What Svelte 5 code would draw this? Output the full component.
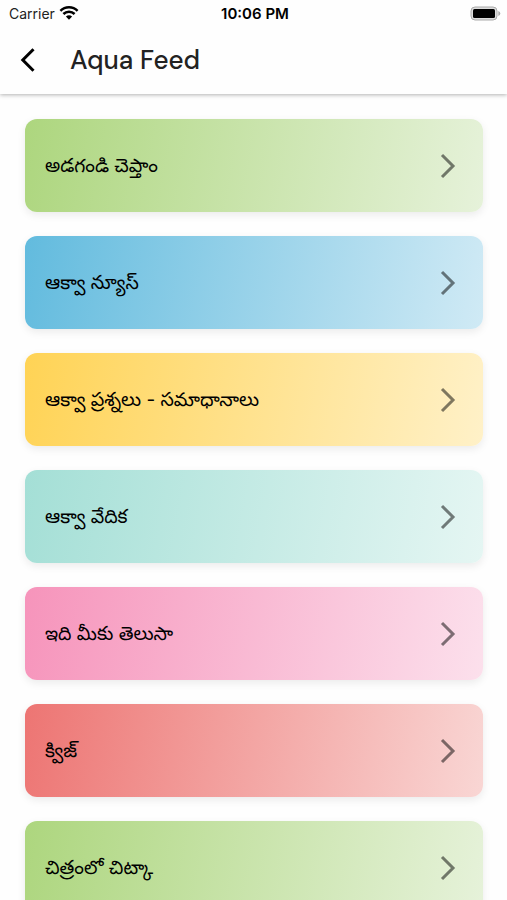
<script lang="ts">
  interface Topic {
    title: string;
    tone: string;
  }

  const topics: Topic[] = [
    { title: 'అడగండి చెప్తాం', tone: 'green' },
    { title: 'ఆక్వా న్యూస్', tone: 'blue' },
    { title: 'ఆక్వా ప్రశ్నలు - సమాధానాలు', tone: 'yellow' },
    { title: 'ఆక్వా వేదిక', tone: 'teal' },
    { title: 'ఇది మీకు తెలుసా', tone: 'pink' },
    { title: 'క్విజ్', tone: 'red' },
    { title: 'చిత్రంలో చిట్కా', tone: 'green' },
  ];
</script>

<div class="screen">
  <header>
    <div class="status">
      <div class="carrier">
        <span>Carrier</span>
        <svg width="20" height="14" viewBox="0 0 20 14" aria-hidden="true">
          <path d="M1.4 4.8a12.4 12.4 0 0 1 17.2 0" />
          <path d="M4.4 8a7.9 7.9 0 0 1 11.2 0" />
          <path class="solid" d="M6.9 10.6a4.5 4.5 0 0 1 6.2 0L10 13.8z" />
        </svg>
      </div>
      <time>10:06 PM</time>
      <svg class="battery" width="31" height="15" viewBox="0 0 31 15" aria-hidden="true">
        <rect class="shell" x="1" y="1" width="26" height="13" rx="4" />
        <rect class="charge" x="3" y="3" width="22" height="9" rx="1.5" />
        <path class="cap" d="M28.3 5q2 .8 2 2.5t-2 2.5z" />
      </svg>
    </div>
    <div class="toolbar">
      <button class="back" aria-label="Back">
        <svg width="16" height="26" viewBox="0 0 16 26" aria-hidden="true">
          <path d="M13.5 2.2L2.8 13l10.7 10.8" />
        </svg>
      </button>
      <h1>Aqua Feed</h1>
    </div>
  </header>

  <main>
    {#each topics as topic}
      <button class="card {topic.tone}">
        <span>{topic.title}</span>
        <svg width="16" height="26" viewBox="0 0 16 26" aria-hidden="true">
          <path d="M2 2l11 11L2 24" />
        </svg>
      </button>
    {/each}
  </main>
</div>

<style>
  :global(body) {
    background: #fefefe;
  }

  .screen {
    display: flex;
    flex-direction: column;
    height: 100vh;
    color: #000;
    font-family: Inter, 'Liberation Sans', sans-serif;
  }

  header {
    position: relative;
    background: #fefefe;
    box-shadow: 0 1px 4px rgba(0, 0, 0, 0.3);
  }

  .status {
    display: grid;
    grid-template-columns: 1fr auto 1fr;
    align-items: center;
    height: 26px;
    padding: 0 6px 0 9px;
    font-size: 15px;
  }

  .carrier {
    display: flex;
    align-items: center;
    gap: 4px;
    color: #222;
    font-size: 14px;
  }

  .carrier path {
    fill: none;
    stroke: #000;
    stroke-width: 2.5;
  }

  .carrier .solid {
    fill: #000;
    stroke: none;
  }

  time {
    font-size: 15px;
    font-weight: 600;
  }

  .battery {
    justify-self: end;
  }

  .shell {
    fill: #ddd;
    stroke: #aaa;
  }

  .charge {
    fill: #000;
  }

  .cap {
    fill: #aaa;
  }

  .toolbar {
    display: flex;
    align-items: center;
    gap: 34px;
    height: 68px;
    padding: 0 20px;
  }

  button {
    border: 0;
    padding: 0;
    background: none;
    color: inherit;
    cursor: pointer;
  }

  .back {
    display: flex;
  }

  .back path {
    fill: none;
    stroke: #000;
    stroke-width: 3;
  }

  h1 {
    margin: 0;
    color: #222;
    font-family: 'DM Sans', Inter, sans-serif;
    font-size: 26px;
    font-weight: 500;
  }

  main {
    flex: 1;
    display: flex;
    flex-direction: column;
    gap: 24px;
    padding: 25px 24px 25px 25px;
    overflow-y: auto;
    scrollbar-width: none;
  }

  .card {
    flex: none;
    display: flex;
    align-items: center;
    justify-content: space-between;
    height: 93px;
    padding: 0 27px 0 20px;
    border-radius: 12px;
    box-shadow: 0 3px 8px rgba(0, 0, 0, 0.08);
    font-family: Inter, 'Noto Sans Telugu', sans-serif;
    font-size: 19px;
    text-align: left;
  }

  .card span {
    padding-top: 4px;
  }

  .card path {
    fill: none;
    stroke: rgba(0, 0, 0, 0.5);
    stroke-width: 3;
  }

  .green {
    background: linear-gradient(100deg, #add67e, #e6f2da);
  }

  .blue {
    background: linear-gradient(100deg, #62bbde, #d0eaf5);
  }

  .yellow {
    background: linear-gradient(100deg, #ffd355, #fff1c8);
  }

  .teal {
    background: linear-gradient(100deg, #a4dfd6, #e5f6f3);
  }

  .pink {
    background: linear-gradient(100deg, #f694bb, #fce0ec);
  }

  .red {
    background: linear-gradient(100deg, #ed7573, #f9d6d4);
  }
</style>
